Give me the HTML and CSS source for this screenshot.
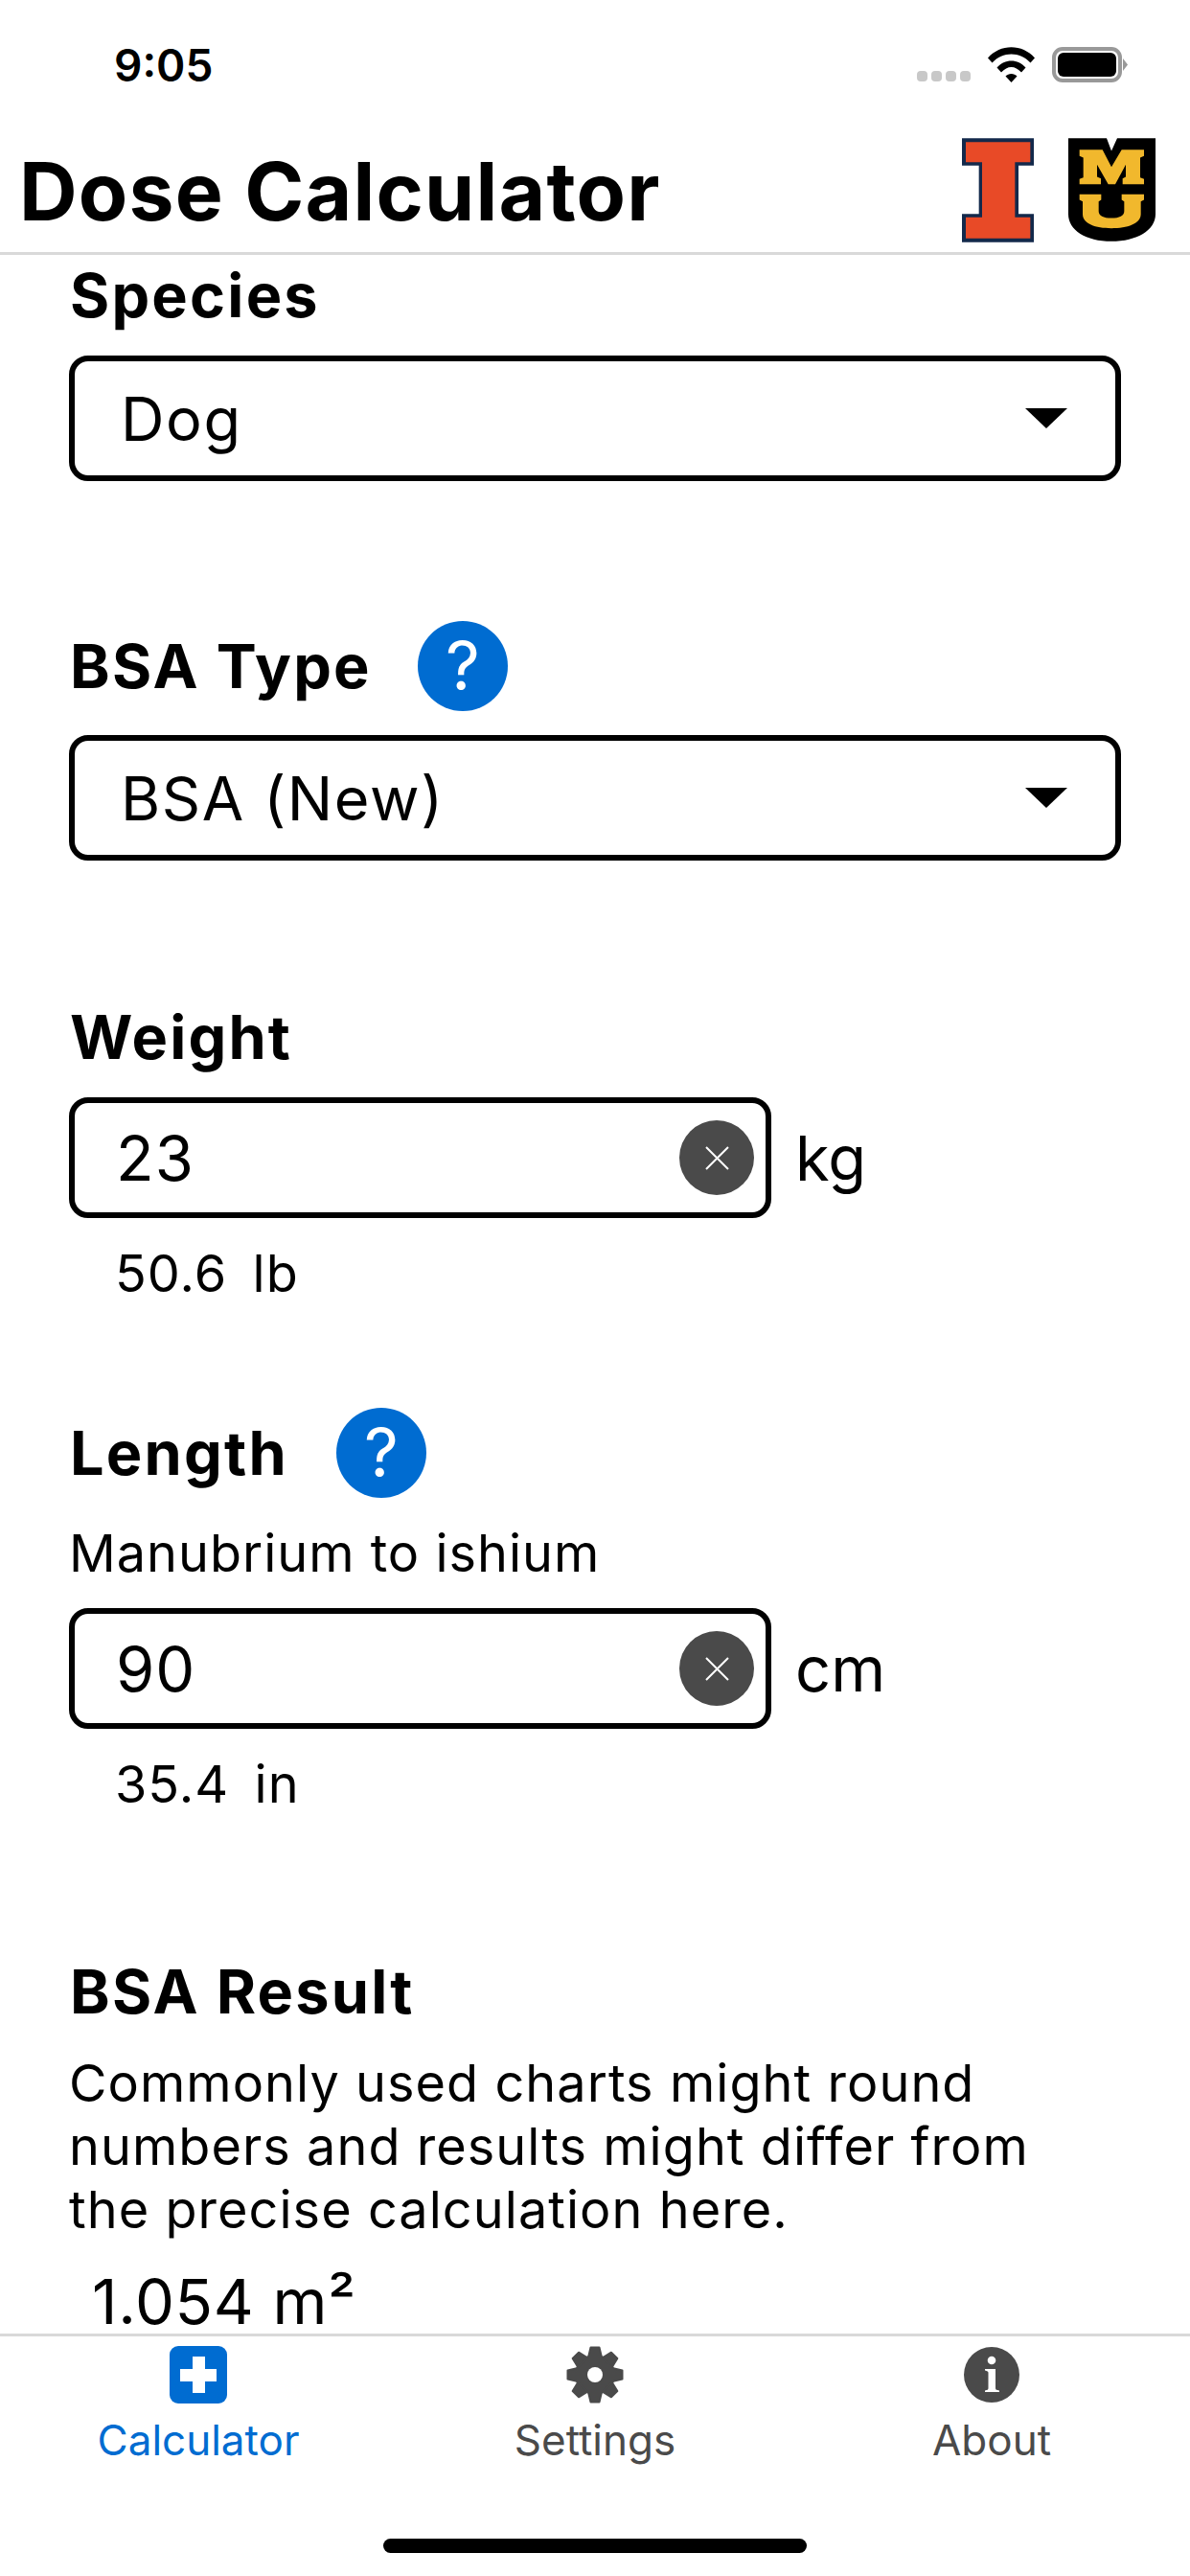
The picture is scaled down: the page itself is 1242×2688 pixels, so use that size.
FILE: index.html
```html
<!DOCTYPE html>
<html lang="en">
<head>
<meta charset="utf-8">
<title>Dose Calculator</title>
<link rel="stylesheet" href="styles.css">
</head>
<body>
<div class="screen">
  <header class="status">
    <span class="time">9:05</span>
    <div class="status-icons">
      <div class="signal"><i></i><i></i><i></i><i></i></div>
      <svg class="wifi" viewBox="0 0 49 37"><path d="M0 11.5C13-3.5 36-3.5 49 11.5L44.500 16.500C33.500 4.500 15.500 4.500 4.500 16.500Z"/><path d="M9.500 21.500C17.500 12 31.500 12 39.500 21.500L35 26.500C28.500 19 20.500 19 14 26.500Z"/><path d="M18.500 30.500C21.500 27 27.500 27 30.500 30.500L24.500 37Z"/></svg>
      <div class="battery"><div class="battery-body"><div class="battery-fill"></div></div><div class="battery-nub"></div></div>
    </div>
  </header>
  <div class="nav">
    <h1 class="title">Dose Calculator</h1>
    <div class="logos">
      <svg class="logo-i" viewBox="132 72 225 326"><path fill="#13294b" d="M132 72H357V158H309V309H357V398H132V309H185V158H132Z"/><path fill="#e84a27" d="M144 84H346V147H298V320H346V386H144V320H195V147H144Z"/></svg>
      <svg class="logo-mu" viewBox="465 72 273 323"><path d="M465 72H585L600 112L618 72H738V310C738 360 680 395 600 395C520 395 465 360 465 310Z"/><path fill="#f1b82d" d="M500 108H572L600 162L632 108H702V128L690 133V195L702 200V216H635V198L645 193V155L612 216H590L555 155V193L567 198V216H500V200L512 195V133L500 128Z"/><path fill="#f1b82d" d="M500 248H568V265L560 270V300C560 315 575 322 600 322C625 322 640 315 640 300V270L632 265V248H702V265L692 270V310C692 340 650 354 600 354C550 354 510 340 510 310V270L500 265Z"/></svg>
    </div>
  </div>
  <main class="content">
    <section class="section first">
      <div class="label">Species</div>
      <div class="select"><span>Dog</span><i class="caret"></i></div>
    </section>
    <section class="section">
      <div class="label-row gap-bsa"><span class="label">BSA Type</span><span class="help">?</span></div>
      <div class="select"><span>BSA (New)</span><i class="caret"></i></div>
    </section>
    <section class="section">
      <div class="label">Weight</div>
      <div class="input-row">
        <div class="input"><span>23</span><span class="clear"><svg viewBox="0 0 25 25"><path d="M1 1L24 24M24 1L1 24"/></svg></span></div>
        <span class="unit">kg</span>
      </div>
      <div class="converted">50.6&nbsp; lb</div>
    </section>
    <section class="section length">
      <div class="label-row gap-length"><span class="label">Length</span><span class="help">?</span></div>
      <div class="hint">Manubrium to ishium</div>
      <div class="input-row">
        <div class="input"><span>90</span><span class="clear"><svg viewBox="0 0 25 25"><path d="M1 1L24 24M24 1L1 24"/></svg></span></div>
        <span class="unit">cm</span>
      </div>
      <div class="converted">35.4&nbsp; in</div>
    </section>
    <section class="section result">
      <div class="label">BSA Result</div>
      <p class="note">Commonly used charts might round<br>numbers and results might differ from<br>the precise calculation here.</p>
      <div class="value">1.054 m²</div>
    </section>
  </main>
  <nav class="tabs">
    <div class="tab active">
      <svg class="tab-icon" viewBox="0 0 60 60"><rect width="60" height="60" rx="9" fill="#006cd1"/><path fill="#fff" d="M24 11H37V24H49V37H37V49H24V37H11V24H24Z"/></svg>
      <span>Calculator</span>
    </div>
    <div class="tab">
      <svg class="tab-icon" viewBox="-30 -30 60 60"><g fill="#4a4a4a" stroke="#4a4a4a" stroke-width="2" stroke-linejoin="round"><circle r="20"/><path d="M-7-18L-4.500-28.500H4.500L7-18Z"/><path d="M-7-18L-4.500-28.500H4.500L7-18Z" transform="rotate(45)"/><path d="M-7-18L-4.500-28.500H4.500L7-18Z" transform="rotate(90)"/><path d="M-7-18L-4.500-28.500H4.500L7-18Z" transform="rotate(135)"/><path d="M-7-18L-4.500-28.500H4.500L7-18Z" transform="rotate(180)"/><path d="M-7-18L-4.500-28.500H4.500L7-18Z" transform="rotate(225)"/><path d="M-7-18L-4.500-28.500H4.500L7-18Z" transform="rotate(270)"/><path d="M-7-18L-4.500-28.500H4.500L7-18Z" transform="rotate(315)"/></g><circle r="8" fill="#fff"/></svg>
      <span>Settings</span>
    </div>
    <div class="tab">
      <svg class="tab-icon" viewBox="0 0 60 60"><circle cx="30" cy="30" r="29" fill="#4a4a4a"/><circle cx="30" cy="15" r="4.300" fill="#fff"/><path fill="#fff" d="M23 24H34V44C34 45.500 35 46 38 46.500V48H23V46.500C25.500 46 26.500 45.500 26.500 44V28C26.500 26.500 25.500 26 23 25.500Z"/></svg>
      <span>About</span>
    </div>
    <div class="home-bar"></div>
  </nav>
</div>
</body>
</html>
```
FILE: styles.css
```css
* { box-sizing: border-box; }
html, body { margin: 0; padding: 0; background: #fff; }
body { font-family: Inter, "Liberation Sans", sans-serif; color: #000; }
.screen { width: 1242px; height: 2688px; display: flex; flex-direction: column; overflow: hidden; }

.status { height: 132px; flex: none; display: flex; justify-content: space-between; align-items: flex-start; padding: 40px 65px 0 119px; }
.time { font-size: 46px; font-weight: 600; line-height: 56px; }
.status-icons { display: flex; align-items: flex-start; padding-top: 9px; }
.signal { display: flex; gap: 4px; margin: 25px 18px 0 0; }
.signal i { width: 11px; height: 11px; border-radius: 4px; background: #c8c8c8; }
.wifi { width: 49px; height: 37px; display: block; margin-right: 18px; }
.battery { display: flex; align-items: center; }
.battery-body { width: 73px; height: 37px; border: 4px solid #999; border-radius: 11px; padding: 2px; }
.battery-fill { width: 100%; height: 100%; background: #000; border-radius: 6px; }
.battery-nub { width: 5px; height: 13px; background: #999; clip-path: polygon(0 0, 100% 50%, 0 100%); margin-left: 1px; }

.nav { height: 134px; flex: none; display: flex; justify-content: space-between; align-items: flex-start; padding: 12px 36px 0 20px; border-bottom: 3px solid #d9d9d9; }
.title { margin: 0; font-size: 84px; font-weight: 700; line-height: 96px; letter-spacing: 1.2px; padding-top: 8px; }
.logos { display: flex; gap: 36px; }
.logo-i { width: 75px; height: 109px; display: block; }
.logo-mu { width: 91px; height: 108px; display: block; }

.content { flex: 1; min-height: 0; padding: 4px 72px 0; }
.section { margin-top: 146px; }
.section.first { margin-top: 0; }
.section.length { margin-top: 107px; }
.section.result { margin-top: 145px; }
.label { display: block; font-size: 63px; font-weight: 700; line-height: 76px; padding-left: 1px; margin-bottom: 25px; letter-spacing: 2.2px; }
.label-row { display: flex; align-items: center; height: 94px; margin-bottom: 25px; }
.label-row .label { margin-bottom: 0; }
.gap-bsa { gap: 48px; }
.gap-length { gap: 50px; }
.help { width: 94px; height: 94px; border-radius: 50%; background: #006cd1; color: #fff; font-size: 70px; line-height: 94px; text-align: center; }

.select { height: 131px; border: 6px solid #000; border-radius: 20px; display: flex; align-items: center; justify-content: space-between; padding: 0 50px 0 48px; font-size: 63px; letter-spacing: 1.6px; }
.caret { width: 0; height: 0; border-left: 22px solid transparent; border-right: 22px solid transparent; border-top: 21px solid #000; }

.input-row { display: flex; align-items: center; gap: 25px; }
.input { width: 733px; height: 126px; border: 6px solid #000; border-radius: 20px; display: flex; align-items: center; justify-content: space-between; padding: 0 12px 0 43px; font-size: 65px; letter-spacing: 1px; }
.clear { width: 78px; height: 78px; border-radius: 50%; background: #4a4a4a; display: flex; align-items: center; justify-content: center; }
.clear svg { width: 25px; height: 25px; display: block; stroke: #fff; stroke-width: 2; fill: none; }
.unit { font-size: 65px; }
.converted { font-size: 54px; line-height: 66px; margin-top: 25px; padding-left: 48px; letter-spacing: 1px; word-spacing: -3px; }
.hint { font-size: 54px; line-height: 66px; margin-bottom: 24px; letter-spacing: 1px; }
.note { margin: 0; font-size: 54px; line-height: 66px; letter-spacing: 1.05px; }
.value { font-size: 65px; line-height: 60px; margin-top: 33px; padding-left: 24px; letter-spacing: 0.7px; }

.tabs { height: 253px; flex: none; border-top: 3px solid #d9d9d9; display: grid; grid-template-columns: repeat(3, 1fr); grid-template-rows: 1fr 39px; padding-top: 10px; }
.tab { display: flex; flex-direction: column; align-items: center; color: #4a4a4a; font-size: 44px; line-height: 56px; }
.tab.active { color: #006cd1; }
.tab-icon { width: 60px; height: 60px; display: block; margin-bottom: 10px; }
.home-bar { grid-column: 1 / -1; justify-self: center; width: 442px; height: 15px; border-radius: 8px; background: #000; }
```
